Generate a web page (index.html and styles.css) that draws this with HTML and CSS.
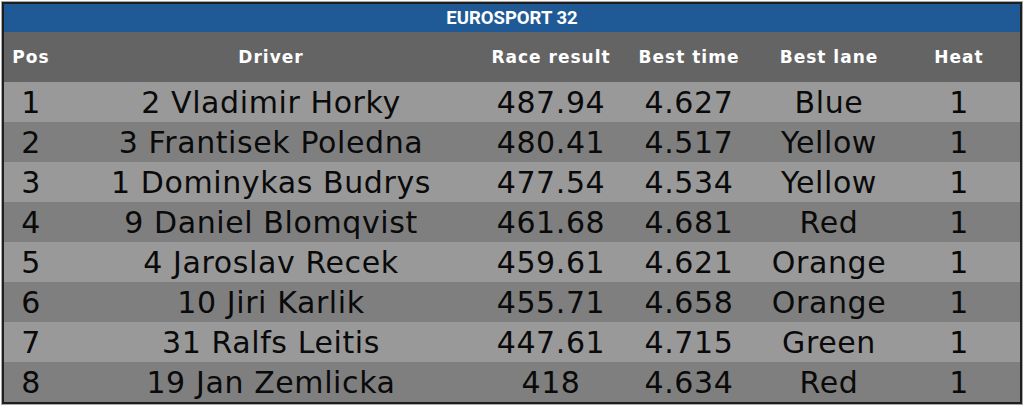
FILE: index.html
```html
<!DOCTYPE html>
<html lang="en">
<head>
	<meta charset="UTF-8">
	<title>Eurosport 32</title>
	<link rel="stylesheet" href="styles.css">
</head>
<body>
	<div class="board">
		<div class="board-inner">
			<div class="board-title">EUROSPORT 32</div>
			<div class="results">
				<div class="results-head">
					<span>Pos</span><span>Driver</span><span>Race result</span><span>Best time</span><span>Best lane</span><span>Heat</span>
				</div>
				<div class="results-row">
					<span>1</span><span>2 Vladimir Horky</span><span>487.94</span><span>4.627</span><span>Blue</span><span>1</span>
				</div>
				<div class="results-row">
					<span>2</span><span>3 Frantisek Poledna</span><span>480.41</span><span>4.517</span><span>Yellow</span><span>1</span>
				</div>
				<div class="results-row">
					<span>3</span><span>1 Dominykas Budrys</span><span>477.54</span><span>4.534</span><span>Yellow</span><span>1</span>
				</div>
				<div class="results-row">
					<span>4</span><span>9 Daniel Blomqvist</span><span>461.68</span><span>4.681</span><span>Red</span><span>1</span>
				</div>
				<div class="results-row">
					<span>5</span><span>4 Jaroslav Recek</span><span>459.61</span><span>4.621</span><span>Orange</span><span>1</span>
				</div>
				<div class="results-row">
					<span>6</span><span>10 Jiri Karlik</span><span>455.71</span><span>4.658</span><span>Orange</span><span>1</span>
				</div>
				<div class="results-row">
					<span>7</span><span>31 Ralfs Leitis</span><span>447.61</span><span>4.715</span><span>Green</span><span>1</span>
				</div>
				<div class="results-row">
					<span>8</span><span>19 Jan Zemlicka</span><span>418</span><span>4.634</span><span>Red</span><span>1</span>
				</div>
			</div>
		</div>
	</div>
</body>
</html>
```

FILE: styles.css
```css
body{
	margin: 0;
	background: #fff;
}
.board{
	margin: 1px 1px 0 1px;
	border: 1px solid #a8a8a8;
	width: 1020px;
}
.board-inner{
	border: 2px solid #1e1e1e;
}
.board-title{
	background: #1f5a97;
	color: #fff;
	height: 28px;
	line-height: 29px;
	text-align: center;
	font-family: Roboto, "Liberation Sans", sans-serif;
	font-weight: bold;
	font-size: 18.5px;
}
.results-head,.results-row{
	display: grid;
	grid-template-columns: 54px 426px 134px 142px 138px 122px;
	text-align: center;
	font-family: "DejaVu Sans", Verdana, sans-serif;
	white-space: nowrap;
}
.results-head{
	background: #646464;
	color: #fff;
	height: 50px;
	line-height: 51px;
	font-weight: bold;
	font-size: 17px;
	letter-spacing: 1px;
}
.results-row{
	height: 40px;
	line-height: 42px;
	font-size: 30px;
	letter-spacing: 0.6px;
	color: #0a0a0a;
	background: #999;
}
.results-row:nth-child(odd){
	background: #7f7f7f;
}
```
